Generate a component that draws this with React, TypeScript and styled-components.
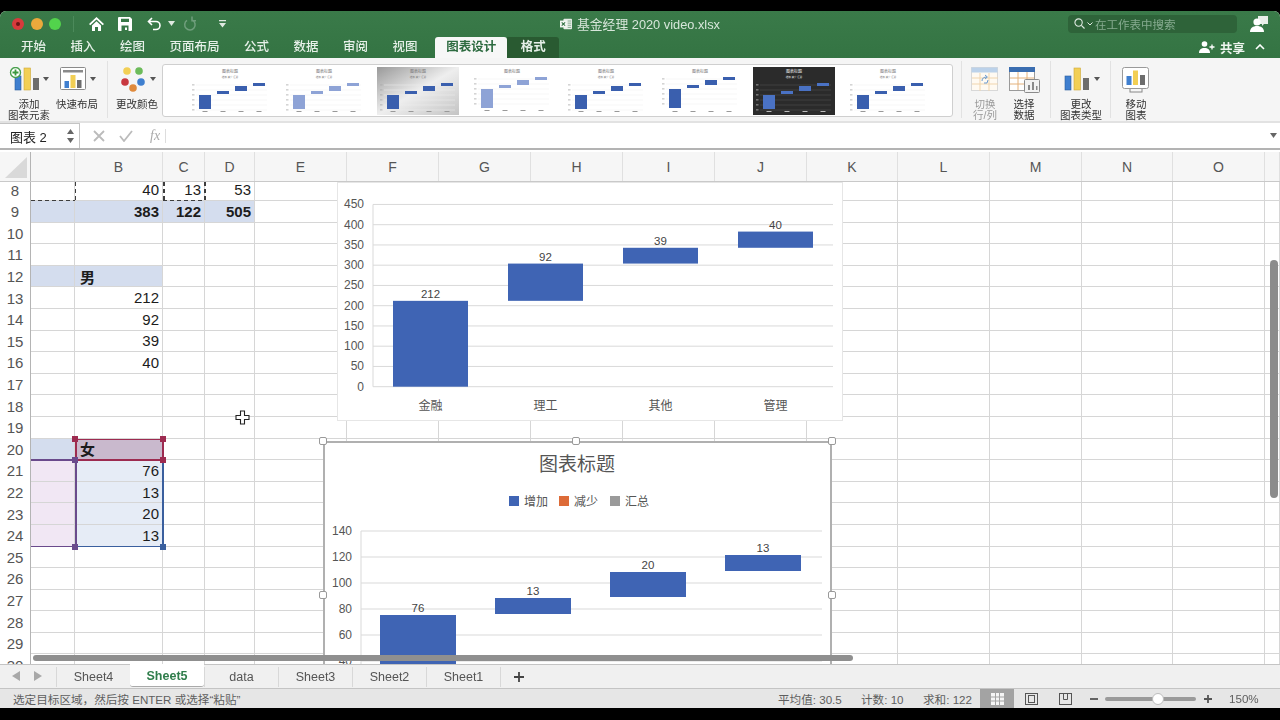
import React from "react";
import styled, { createGlobalStyle, css } from "styled-components";

const FONT = `"Liberation Sans", "Noto Sans CJK SC", sans-serif`;
const BLUE = "#3f64b4";

const GlobalStyle = createGlobalStyle`
  html, body { margin: 0; padding: 0; background: #000; }
  body { font-family: ${FONT}; overflow: hidden; }
`;

const Screen = styled.div`
  width: 1280px;
  height: 720px;
  padding: 11px 0 12px;
  box-sizing: border-box;
  filter: blur(0.35px);
`;

const Win = styled.div`
  height: 697px;
  display: flex;
  flex-direction: column;
  border-radius: 6px 6px 0 0;
  overflow: hidden;
  background: #fff;
`;

/* ---------- title bar ---------- */
const Head = styled.header`
  background: linear-gradient(#3a7a49, #347443);
  height: 47px;
  flex: none;
`;

const TitleRow = styled.div`
  height: 25px;
  display: grid;
  grid-template-columns: 1fr auto 1fr;
  align-items: center;
`;

const QuickBar = styled.div`
  display: flex;
  align-items: center;
  padding-left: 12px;
`;

const Light = styled.span<{ $c: string; $dot?: boolean }>`
  width: 12px;
  height: 12px;
  margin-right: 6.5px;
  border-radius: 50%;
  background: ${(p) => p.$c};
  display: flex;
  align-items: center;
  justify-content: center;
  ${(p) =>
    p.$dot &&
    css`
      &::after {
        content: "";
        width: 4px;
        height: 4px;
        border-radius: 50%;
        background: #6b1416;
      }
    `}
`;

const BarDivider = styled.span`
  width: 1px;
  height: 16px;
  background: #4c8a5b;
  margin: 0 15px 0 5px;
`;

const QuickIcon = styled.span<{ $w: number }>`
  width: ${(p) => p.$w}px;
  display: flex;
  align-items: center;
`;

const DocTitle = styled.div`
  display: flex;
  align-items: center;
  gap: 5px;
  color: #d7e6da;
  font-size: 12.8px;
  white-space: nowrap;
`;

const RightTools = styled.div`
  display: flex;
  align-items: center;
  justify-content: flex-end;
  padding-right: 12px;
`;

const Search = styled.div`
  width: 169px;
  height: 18px;
  background: #2e6339;
  border-radius: 4px;
  display: flex;
  align-items: center;
  padding-left: 6px;
  box-sizing: border-box;
  gap: 2px;
  margin-right: 13px;
  color: #86ab90;
  font-size: 11.5px;
`;

const TabRow = styled.nav`
  height: 22px;
  display: flex;
  align-items: flex-end;
  padding-left: 21px;
`;

const Tab = styled.div<{ $active?: boolean; $dark?: boolean; $last?: boolean }>`
  height: 21px;
  line-height: 21px;
  font-size: 12.5px;
  font-weight: 500;
  color: #e6f0e8;
  margin-right: ${(p) => (p.$last ? 17.5 : 24.5)}px;
  white-space: nowrap;
  ${(p) =>
    p.$active &&
    css`
      margin: 0;
      padding: 0 11px;
      background: #f7f7f7;
      color: #2d6b40;
      font-weight: 700;
      border-radius: 3px 3px 0 0;
    `}
  ${(p) =>
    p.$dark &&
    css`
      margin: 0;
      padding: 0 13.5px;
      background: #295a31;
      font-weight: 700;
      border-radius: 0 3px 0 0;
    `}
`;

const Share = styled.div`
  margin-left: auto;
  height: 22px;
  display: flex;
  align-items: center;
  color: #eef5ef;
  font-size: 12.5px;
  font-weight: 700;
  gap: 5px;
  padding-right: 15px;
`;

const Chevron = styled.span`
  margin-left: 5px;
  display: flex;
`;

/* ---------- ribbon ---------- */
const Ribbon = styled.section`
  height: 65px;
  flex: none;
  background: #f5f5f5;
  border-bottom: 2px solid #e2e2e2;
  box-sizing: border-box;
  display: flex;
  padding-left: 5px;
`;

const RibbonBtn = styled.div<{ $w: number; $off?: boolean }>`
  width: ${(p) => p.$w}px;
  flex: none;
  display: flex;
  flex-direction: column;
  align-items: center;
  color: ${(p) => (p.$off ? "#9a9a9a" : "#333")};
  font-size: 10.5px;
  line-height: 11px;
  text-align: center;
  white-space: nowrap;
`;

const RibbonIcon = styled.div`
  height: 41px;
  padding-top: 9px;
  box-sizing: border-box;
  display: flex;
  align-items: flex-start;
`;

const RibbonSep = styled.div<{ $l: number; $r: number }>`
  width: 1px;
  height: 57px;
  margin: 3px ${(p) => p.$r}px 0 ${(p) => p.$l}px;
  background: #e2e2e2;
  flex: none;
`;

const Gallery = styled.div`
  width: 791px;
  height: 53px;
  margin-top: 6px;
  flex: none;
  background: #fff;
  border: 1px solid #cfcfcf;
  border-radius: 3px;
  box-sizing: border-box;
  display: flex;
  align-items: center;
  padding-left: 26px;
  gap: 12px;
`;

/* ---------- formula bar ---------- */
const FormulaBar = styled.div`
  height: 27px;
  flex: none;
  background: #fff;
  display: flex;
  align-items: center;
  border-bottom: 2px solid #b3b3b3;
  box-sizing: border-box;
  color: #bbb;
`;

const NameBox = styled.div`
  width: 80px;
  height: 25px;
  border: 1px solid #c4c4c4;
  border-width: 1px 1px 0 0;
  box-sizing: border-box;
  display: flex;
  align-items: center;
  justify-content: space-between;
  padding: 0 5px 0 10px;
  color: #222;
  font-size: 13px;
`;

const FormulaIcon = styled.span<{ $ml: number }>`
  margin-left: ${(p) => p.$ml}px;
  display: flex;
`;

const FxMark = styled.span`
  font-family: "Liberation Serif", serif;
  font-style: italic;
  font-size: 14px;
  color: #aaa;
  margin-left: 17px;
  width: 14px;
`;

const FxRule = styled.span`
  width: 1px;
  height: 14px;
  background: #ddd;
  margin-left: 1px;
`;

const FormulaEnd = styled.span`
  margin-left: auto;
  margin-right: 3px;
  display: flex;
`;

/* ---------- sheet ---------- */
const COLS = "31px 44px 88px 42px 50px 92px 92px 92px 92px 92px 92px 91px 92px 92px 91px 92px 15px";

const ColHeader = styled.div`
  height: 29px;
  flex: none;
  display: grid;
  grid-template-columns: ${COLS};
  background: #f6f6f6;
  border-bottom: 1px solid #c9c9c9;
  box-sizing: content-box;
  margin-top: 2px;
`;

const ColCell = styled.div`
  display: flex;
  align-items: center;
  justify-content: center;
  font-size: 14px;
  color: #555;
  border-right: 1px solid #e0e0e0;
`;

const Corner = styled.div`
  border-right: 1px solid #b4b4b4;
  position: relative;
  &::after {
    content: "";
    position: absolute;
    inset: 5px 3px 3px 5px;
    background: #d9d9d9;
    clip-path: polygon(100% 0, 100% 100%, 0 100%);
  }
`;

const SheetView = styled.div`
  flex: 1;
  position: relative;
  overflow: hidden;
  background: #fff;
`;

const Grid = styled.div`
  display: grid;
  grid-template-columns: ${COLS};
  grid-auto-rows: 21.6px;
  margin-top: -2.6px;
`;

const RowHead = styled.div`
  display: flex;
  align-items: center;
  justify-content: center;
  font-size: 15px;
  color: #555;
  border-right: 1px solid #b4b4b4;
  box-sizing: border-box;
`;

const Cell = styled.div<{ $fill?: string; $bold?: boolean; $left?: boolean }>`
  box-sizing: border-box;
  border-right: 1px solid #d6d6d6;
  border-bottom: 1px solid #d6d6d6;
  background: ${(p) => p.$fill || "transparent"};
  font-size: 15px;
  font-weight: ${(p) => (p.$bold ? 700 : 400)};
  color: #1c1c1c;
  display: flex;
  align-items: center;
  justify-content: ${(p) => (p.$left ? "flex-start" : "flex-end")};
  padding: 0 3px 0 5px;
`;

const Edge = styled.div<{ $x: number; $y: number; $w: number; $h: number; $c: string; $dash?: boolean }>`
  position: absolute;
  left: ${(p) => p.$x}px;
  top: ${(p) => p.$y}px;
  width: ${(p) => p.$w}px;
  height: ${(p) => p.$h}px;
  ${(p) =>
    p.$dash
      ? css`
          background-image: repeating-linear-gradient(
            ${p.$w > p.$h ? "90deg" : "0deg"},
            ${p.$c} 0 4px,
            transparent 4px 7px
          );
        `
      : css`
          background: ${p.$c};
        `}
`;

const Knob = styled.div<{ $x: number; $y: number; $c: string }>`
  position: absolute;
  left: ${(p) => p.$x - 3}px;
  top: ${(p) => p.$y - 3}px;
  width: 6px;
  height: 6px;
  background: ${(p) => p.$c};
`;

const ChartOne = styled.div`
  position: absolute;
  left: 337px;
  top: 0;
  width: 506px;
  height: 239px;
  background: #fff;
  border: 1px solid #e6e6e6;
  box-sizing: border-box;
`;

const ChartTwo = styled.div`
  position: absolute;
  left: 323px;
  top: 259px;
  width: 509px;
  height: 300px;
  background: #fff;
  border: 2px solid #b0b0b0;
  box-sizing: border-box;
`;

const Grip = styled.div<{ $x: number; $y: number }>`
  position: absolute;
  left: ${(p) => p.$x - 4}px;
  top: ${(p) => p.$y - 4}px;
  width: 8px;
  height: 8px;
  background: #fff;
  border: 1px solid #9a9a9a;
  border-radius: 2px;
  box-sizing: border-box;
`;

const HScroll = styled.div`
  position: absolute;
  left: 33px;
  bottom: 3px;
  width: 820px;
  height: 6px;
  border-radius: 3px;
  background: #8f8f8f;
`;

const VScroll = styled.div`
  position: absolute;
  left: 1270px;
  top: 78px;
  width: 8px;
  height: 238px;
  border-radius: 4px;
  background: #8c8c8c;
`;

const CursorMark = styled.svg`
  position: absolute;
  left: 235px;
  top: 228px;
`;

/* ---------- sheet tabs + status ---------- */
const TabStrip = styled.div`
  height: 24px;
  flex: none;
  background: #f0f0f0;
  border-top: 1px solid #c4c4c4;
  box-sizing: border-box;
  display: flex;
  align-items: flex-start;
`;

const StripArrows = styled.div`
  width: 56px;
  height: 22px;
  box-sizing: border-box;
  display: flex;
  align-items: center;
  padding-left: 12px;
  gap: 14px;
`;

const SheetTab = styled.div<{ $active?: boolean; $w?: number }>`
  width: ${(p) => p.$w || 74}px;
  height: 20px;
  margin-top: 2px;
  box-sizing: border-box;
  display: flex;
  align-items: center;
  justify-content: center;
  font-size: 12.5px;
  color: #555;
  border-left: 1px solid #d8d8d8;
  ${(p) =>
    p.$active &&
    css`
      background: #fff;
      color: #2f7d4b;
      font-weight: 700;
      margin-top: -1px;
      height: 23px;
      padding-top: 2px;
      border: none;
      border-bottom: 1px solid #aaa;
      border-radius: 0 0 3px 3px;
    `}
`;

const StatusBar = styled.footer`
  height: 20px;
  flex: none;
  background: #e6e6e6;
  border-top: 1px solid #c4c4c4;
  box-sizing: border-box;
  display: flex;
  align-items: center;
  padding-left: 13px;
  color: #5e5e5e;
`;

const StatText = styled.span<{ $w: number; $ml?: number }>`
  width: ${(p) => p.$w}px;
  margin-left: ${(p) => p.$ml || 0}px;
  flex: none;
  font-size: 11.6px;
  white-space: nowrap;
`;

const ViewBtn = styled.div<{ $on?: boolean }>`
  width: 34px;
  height: 19px;
  flex: none;
  display: flex;
  align-items: center;
  justify-content: center;
  background: ${(p) => (p.$on ? "#a3a3a3" : "transparent")};
`;

const ZoomSign = styled.span`
  display: flex;
`;

const ZoomMinus = styled(ZoomSign)`
  margin-left: 8px;
`;

const ZoomTrack = styled.div`
  width: 91px;
  height: 4px;
  border-radius: 2px;
  background: #9a9a9a;
  margin: 0 8px 0 7px;
  position: relative;
`;

const ZoomKnob = styled.span`
  position: absolute;
  left: 47px;
  top: -4px;
  width: 12px;
  height: 12px;
  border-radius: 50%;
  background: #fff;
  border: 1px solid #bbb;
  box-sizing: border-box;
`;

const Caret = ({ c = "#555" }: { c?: string }) => (
  <svg width="7" height="5" viewBox="0 0 7 5">
    <path d="M0 0h7L3.500 5z" fill={c} />
  </svg>
);

const Bars = () => (
  <g>
    <rect x="0" y="9" width="6" height="14" fill="#3f7fcf" stroke="#2a5c9c" strokeWidth=".6" />
    <rect x="9" y="1" width="6.500" height="22" fill="#f2cf55" stroke="#cda93a" strokeWidth=".6" />
    <rect x="18" y="11" width="6" height="12" fill="#6d6d6d" />
  </g>
);

const AddIcon = () => (
  <svg width="44" height="26" viewBox="0 0 44 26">
    <g transform="translate(8 0)">
      <Bars />
    </g>
    <circle cx="8.500" cy="5.500" r="5" fill="#fff" stroke="#4aa04e" strokeWidth="1.400" />
    <path d="M8.500 2.500v6M5.500 5.500h6" stroke="#3c983f" strokeWidth="1.800" />
    <path d="M36 10h6l-3 4z" fill="#555" />
  </svg>
);

const LayoutIcon = () => (
  <svg width="38" height="25" viewBox="0 0 38 25">
    <g transform="translate(2 0)">
      <rect x=".5" y=".5" width="25" height="22" rx="1" fill="#fff" stroke="#8a8a8a" />
      <rect x="3" y="3" width="20" height="2.500" fill="#8a8a8a" />
      <rect x="4.500" y="14" width="4.500" height="7" fill="#3f7fcf" />
      <rect x="10.500" y="8" width="5" height="13" fill="#f2cf55" />
      <rect x="17" y="13" width="4.500" height="8" fill="#6d6d6d" />
    </g>
    <path d="M32 10h6l-3 4z" fill="#555" />
  </svg>
);

const ColorIcon = () => (
  <svg width="38" height="27" viewBox="0 0 38 27">
    <circle cx="9" cy="4" r="3.800" fill="#f2cf55" />
    <circle cx="21" cy="4" r="3.800" fill="#6cbb5a" />
    <circle cx="7" cy="15" r="3.800" fill="#c8383f" />
    <circle cx="23" cy="15" r="3.800" fill="#3f7fcf" />
    <circle cx="15" cy="21" r="3.800" fill="#e08a3c" />
    <path d="M32 10h6l-3 4z" fill="#555" />
  </svg>
);

const SwitchIcon = () => (
  <svg width="28" height="25" viewBox="0 0 28 25">
    <rect x=".5" y=".5" width="26" height="23" fill="#fffaf2" stroke="#d8d8d8" />
    <rect x=".5" y=".5" width="26" height="5" fill="#bcd2ea" />
    <path d="M1 11h26M1 17h26M9 6v18M18 6v18" stroke="#f0d5ae" />
    <path d="M11 14c0-3 2-4 5-4M14 8l2.400 2L14 12M17 13l-1 3-3 0" stroke="#6b9bd1" fill="none" />
  </svg>
);

const DataIcon = () => (
  <svg width="31" height="26" viewBox="0 0 31 26">
    <rect x=".5" y=".5" width="25" height="23" fill="#fff" stroke="#9a9a9a" />
    <rect x="0" y="0" width="26" height="5" fill="#3a6db0" />
    <path d="M9 5v18M18 5v18M1 11h24M1 17h24" stroke="#e4b27c" />
    <rect x="15.500" y="12.500" width="15" height="13" rx="1" fill="#f2f2f2" stroke="#8a8a8a" />
    <path d="M19 18h2v5h-2zM23 15h2v8h-2zM27 19h1.500v4H27z" fill="#8a8a8a" />
  </svg>
);

const TypeIcon = () => (
  <svg width="38" height="25" viewBox="0 0 38 25">
    <g transform="translate(3 0)">
      <Bars />
    </g>
    <path d="M32 10h6l-3 4z" fill="#555" />
  </svg>
);

const MoveIcon = () => (
  <svg width="28" height="26" viewBox="0 0 28 26">
    <rect x="8" y="19" width="12" height="6" fill="#f7f7f7" stroke="#888" />
    <rect x=".5" y=".5" width="26" height="21" rx="2" fill="#fff" stroke="#9a9a9a" />
    <rect x="4.500" y="9" width="5" height="9" fill="#3f7fcf" />
    <rect x="11" y="3.500" width="5" height="14.500" fill="#f2cf55" />
    <rect x="18" y="8" width="5" height="10" fill="#6d6d6d" />
  </svg>
);

type ThumbKind = {
  dark?: boolean;
  grey?: boolean;
  pale?: boolean;
  legend?: boolean;
  bottom?: boolean;
  tall?: boolean;
};

const THUMBS: ThumbKind[] = [
  { legend: true },
  { legend: true, pale: true },
  { legend: true, grey: true },
  { pale: true, bottom: true, tall: true },
  { legend: true },
  { tall: true },
  { legend: true, dark: true },
  { legend: true },
];

const Thumb = ({ dark, grey, pale, legend, bottom, tall }: ThumbKind) => {
  const fill = pale ? "#8ea3d6" : dark ? "#4a72c4" : "#3a5fae";
  const ink = dark ? "#eee" : "#777";
  const shift = tall ? -6 : 0;
  const bars = [
    [10, 28, 14],
    [28, 24, 3],
    [46, 19, 5],
    [64, 16, 3],
  ];
  return (
    <svg width="82" height="48" viewBox="0 0 82 48">
      <defs>
        <linearGradient id="thumbGrey" x1="0" y1="0" x2="1" y2="1">
          <stop offset="0" stopColor="#999" />
          <stop offset=".5" stopColor="#eee" />
          <stop offset="1" stopColor="#c4c4c4" />
        </linearGradient>
      </defs>
      <rect width="82" height="48" fill={dark ? "#2b2b2b" : grey ? "url(#thumbGrey)" : "#fff"} />
      <text x="41" y="6" fontSize="4" textAnchor="middle" fill={ink} fontFamily={FONT}>
        图表标题
      </text>
      {legend && (
        <text x="41" y="11" fontSize="2.500" textAnchor="middle" fill={ink} fontFamily={FONT}>
          增加 减少 汇总
        </text>
      )}
      {[0, 1, 2, 3, 4, 5].map((i) => (
        <g key={i}>
          <line x1="7" x2="78" y1={18 + i * 5 + shift} y2={18 + i * 5 + shift} stroke={dark ? "#555" : "#eee"} strokeWidth=".5" />
          <rect x="3" y={17.5 + i * 5 + shift} width="2.500" height=".8" fill={dark ? "#bbb" : "#aaa"} />
        </g>
      ))}
      {bars.map(([x, y, h]) => (
        <rect key={x} x={x} y={y + shift} width="12" height={tall && x === 10 ? h + 5 : h} fill={fill} />
      ))}
      {[16, 34, 52, 70].map((x) => (
        <rect key={x} x={x - 2.5} y={44 + (bottom ? -1 : 0)} width="5" height="1" fill={dark ? "#bbb" : "#999"} />
      ))}
    </svg>
  );
};

const FONT_ATTR = { fontFamily: FONT };

const ChartOneArt = () => {
  const y = (v: number) => 203.7 - v * 0.405;
  const ticks = [0, 50, 100, 150, 200, 250, 300, 350, 400, 450];
  const bars = [
    { x: 55, from: 0, to: 212, label: "212", cat: "金融" },
    { x: 170, from: 212, to: 304, label: "92", cat: "理工" },
    { x: 285, from: 304, to: 343, label: "39", cat: "其他" },
    { x: 400, from: 343, to: 383, label: "40", cat: "管理" },
  ];
  return (
    <svg width="504" height="237" viewBox="0 0 504 237" {...FONT_ATTR}>
      {ticks.map((t) => (
        <g key={t}>
          <line x1="35" x2="495" y1={y(t)} y2={y(t)} stroke="#d9d9d9" />
          <text x="26" y={y(t) + 4} fontSize="12" textAnchor="end" fill="#555">
            {t}
          </text>
        </g>
      ))}
      <line x1="35" x2="35" y1={y(450)} y2={y(0)} stroke="#d9d9d9" />
      {bars.map((b) => (
        <g key={b.cat}>
          <rect x={b.x} y={y(b.to)} width="75" height={y(b.from) - y(b.to)} fill={BLUE} />
          <text x={b.x + 37.5} y={y(b.to) - 3} fontSize="11.5" textAnchor="middle" fill="#444">
            {b.label}
          </text>
          <text x={b.x + 37.5} y="227" fontSize="12" textAnchor="middle" fill="#555">
            {b.cat}
          </text>
        </g>
      ))}
    </svg>
  );
};

const ChartTwoArt = () => {
  const y = (v: number) => 88 + (140 - v) * 1.3;
  const ticks = [140, 120, 100, 80, 60, 40];
  const bars = [
    { x: 55, top: 172, bot: 296, label: "76" },
    { x: 170, top: 155, bot: 171, label: "13" },
    { x: 285, top: 129, bot: 154, label: "20" },
    { x: 400, top: 112, bot: 128, label: "13" },
  ];
  const legend = [
    { x: 184, c: BLUE, t: "增加" },
    { x: 234, c: "#dd6b38", t: "减少" },
    { x: 285, c: "#9a9a9a", t: "汇总" },
  ];
  return (
    <svg width="505" height="296" viewBox="0 0 505 296" {...FONT_ATTR}>
      <text x="252" y="28" fontSize="19" textAnchor="middle" fill="#555">
        图表标题
      </text>
      {legend.map((l) => (
        <g key={l.t}>
          <rect x={l.x} y="53" width="10" height="10" fill={l.c} />
          <text x={l.x + 15} y="63" fontSize="12" fill="#555">
            {l.t}
          </text>
        </g>
      ))}
      {ticks.map((t) => (
        <g key={t}>
          <line x1="36" x2="497" y1={y(t)} y2={y(t)} stroke="#d9d9d9" />
          <text x="27" y={y(t) + 4} fontSize="12" textAnchor="end" fill="#555">
            {t}
          </text>
        </g>
      ))}
      <line x1="36" x2="36" y1={y(140)} y2="296" stroke="#d9d9d9" />
      {bars.map((b) => (
        <g key={b.x}>
          <rect x={b.x} y={b.top} width="76" height={b.bot - b.top} fill={BLUE} />
          <text x={b.x + 38} y={b.top - 3} fontSize="11.5" textAnchor="middle" fill="#444">
            {b.label}
          </text>
        </g>
      ))}
    </svg>
  );
};

type CellDef = { text?: string; fill?: string; bold?: boolean; left?: boolean };

const HEADER_BLUE = "#d4ddee";
const SHEET: Record<number, Record<string, CellDef>> = {
  8: { B: { text: "40" }, C: { text: "13" }, D: { text: "53" } },
  9: {
    A: { fill: HEADER_BLUE },
    B: { text: "383", bold: true, fill: HEADER_BLUE },
    C: { text: "122", bold: true, fill: HEADER_BLUE },
    D: { text: "505", bold: true, fill: HEADER_BLUE },
  },
  12: { A: { fill: HEADER_BLUE }, B: { text: "男", bold: true, left: true, fill: HEADER_BLUE } },
  13: { B: { text: "212" } },
  14: { B: { text: "92" } },
  15: { B: { text: "39" } },
  16: { B: { text: "40" } },
  20: { A: { fill: HEADER_BLUE }, B: { text: "女", bold: true, left: true, fill: "#c9b9cd" } },
  21: { A: { fill: "#f1e7f4" }, B: { text: "76", fill: "#e6ecf6" } },
  22: { A: { fill: "#f1e7f4" }, B: { text: "13", fill: "#e6ecf6" } },
  23: { A: { fill: "#f1e7f4" }, B: { text: "20", fill: "#e6ecf6" } },
  24: { A: { fill: "#f1e7f4" }, B: { text: "13", fill: "#e6ecf6" } },
};

const LETTERS = ["A", "B", "C", "D", "E", "F", "G", "H", "I", "J", "K", "L", "M", "N", "O", ""];
const ROWS = Array.from({ length: 23 }, (_, i) => i + 8);
const rowTop = (n: number) => 19 + (n - 9) * 21.6;

const RED = "#9d2b50";
const PURPLE = "#6a4a8c";
const NAVY = "#3a5f9e";
const TABS = ["开始", "插入", "绘图", "页面布局", "公式", "数据", "审阅", "视图"];

export default function App() {
  return (
    <Screen>
      <GlobalStyle />
      <Win>
        <Head>
          <TitleRow>
            <QuickBar>
              <Light $c="#d63a3c" $dot />
              <Light $c="#eaa93c" />
              <Light $c="#52d34c" />
              <BarDivider />
              <QuickIcon $w={29}>
                <svg width="15" height="14" viewBox="0 0 15 14">
                  <path d="M7.500 0 15 7l-1.300 1.200L7.500 2.400 1.300 8.200 0 7z M3 8.500l4.500-4.200L12 8.500V14H9V10H6v4H3z" fill="#fff" />
                </svg>
              </QuickIcon>
              <QuickIcon $w={29}>
                <svg width="14" height="14" viewBox="0 0 14 14">
                  <path fillRule="evenodd" d="M1 0h11l2 2v11a1 1 0 0 1-1 1H1a1 1 0 0 1-1-1V1a1 1 0 0 1 1-1zM3 1.800V5h8V1.800zM3.500 8.500V14h7V8.500z" fill="#fff" />
                  <rect x="7" y="10.500" width="2" height="2.500" fill="#fff" />
                </svg>
              </QuickIcon>
              <QuickIcon $w={21}>
                <svg width="15" height="14" viewBox="0 0 15 14">
                  <path d="M5 1 1.500 4.500 5 8M2 4.500h7a4 4 0 0 1 0 8H6" fill="none" stroke="#fff" strokeWidth="1.600" />
                </svg>
              </QuickIcon>
              <QuickIcon $w={15}>
                <Caret c="#dfe9e1" />
              </QuickIcon>
              <QuickIcon $w={36}>
                <svg width="14" height="15" viewBox="0 0 14 15">
                  <path d="M9.500 4.200a5.200 5.200 0 1 1-5.500.2" fill="none" stroke="#6f9e7c" strokeWidth="1.500" />
                  <path d="M9 .5v4.200h4" fill="none" stroke="#6f9e7c" strokeWidth="1.500" />
                </svg>
              </QuickIcon>
              <QuickIcon $w={8}>
                <svg width="7" height="8" viewBox="0 0 7 8">
                  <path d="M0 0h7v1.200H0zM0 3h7L3.500 7.500z" fill="#dfe9e1" />
                </svg>
              </QuickIcon>
            </QuickBar>
            <DocTitle>
              <svg width="12" height="14" viewBox="0 0 14 14">
                <rect x="4" y="1" width="10" height="12" rx="1" fill="#e9efe9" />
                <path d="M9 3.500h4M9 6h4M9 8.500h4M9 11h4" stroke="#7da488" />
                <rect x="0" y="3" width="8" height="8" fill="#f2f6f2" />
                <path d="m2 5 4 4m0-4-4 4" stroke="#2f7040" strokeWidth="1.200" />
              </svg>
              基金经理 2020 video.xlsx
            </DocTitle>
            <RightTools>
              <Search>
                <svg width="11" height="11" viewBox="0 0 12 12">
                  <circle cx="5" cy="5" r="4" fill="none" stroke="#dfe9e1" strokeWidth="1.200" />
                  <path d="m8 8 3.500 3.500" stroke="#dfe9e1" strokeWidth="1.300" />
                </svg>
                <svg width="6" height="4" viewBox="0 0 6 4">
                  <path d="m.5.500 2.500 2.500L5.500.500" fill="none" stroke="#dfe9e1" />
                </svg>
                在工作表中搜索
              </Search>
              <svg width="18" height="18" viewBox="0 0 18 18">
                <path d="M8 1h10v8h-4l-2 2v-2H8z" fill="#e9efe9" />
                <circle cx="7" cy="7" r="3.600" fill="#fff" />
                <path d="M0 17c0-4 3-6 7-6s7 2 7 6z" fill="#fff" />
              </svg>
            </RightTools>
          </TitleRow>
          <TabRow>
            {TABS.map((t, i) => (
              <Tab key={t} $last={i === TABS.length - 1}>
                {t}
              </Tab>
            ))}
            <Tab $active>图表设计</Tab>
            <Tab $dark>格式</Tab>
            <Share>
              <svg width="16" height="12" viewBox="0 0 16 12">
                <circle cx="5.500" cy="3" r="2.800" fill="#fff" />
                <path d="M0 12c0-3.500 2-5 5.500-5S11 8.500 11 12z" fill="#fff" />
                <path d="M13 3.500v5M10.500 6h5" stroke="#fff" strokeWidth="1.300" />
              </svg>
              共享
              <Chevron>
                <svg width="10" height="6" viewBox="0 0 10 6">
                  <path d="m1 5 4-4 4 4" fill="none" stroke="#fff" strokeWidth="1.600" />
                </svg>
              </Chevron>
            </Share>
          </TabRow>
        </Head>

        <Ribbon>
          <RibbonBtn $w={48}>
            <RibbonIcon>
              <AddIcon />
            </RibbonIcon>
            添加
            <br />
            图表元素
          </RibbonBtn>
          <RibbonBtn $w={48}>
            <RibbonIcon>
              <LayoutIcon />
            </RibbonIcon>
            快速布局
          </RibbonBtn>
          <RibbonSep $l={6} $r={4} />
          <RibbonBtn $w={50}>
            <RibbonIcon>
              <ColorIcon />
            </RibbonIcon>
            更改颜色
          </RibbonBtn>
          <Gallery>
            {THUMBS.map((t, i) => (
              <Thumb key={i} {...t} />
            ))}
          </Gallery>
          <RibbonSep $l={8} $r={3} />
          <RibbonBtn $w={40} $off>
            <RibbonIcon>
              <SwitchIcon />
            </RibbonIcon>
            切换
            <br />
            行/列
          </RibbonBtn>
          <RibbonBtn $w={38}>
            <RibbonIcon>
              <DataIcon />
            </RibbonIcon>
            选择
            <br />
            数据
          </RibbonBtn>
          <RibbonSep $l={7} $r={1} />
          <RibbonBtn $w={58}>
            <RibbonIcon>
              <TypeIcon />
            </RibbonIcon>
            更改
            <br />
            图表类型
          </RibbonBtn>
          <RibbonSep $l={0} $r={0} />
          <RibbonBtn $w={50}>
            <RibbonIcon>
              <MoveIcon />
            </RibbonIcon>
            移动
            <br />
            图表
          </RibbonBtn>
        </Ribbon>

        <FormulaBar>
          <NameBox>
            图表 2
            <svg width="7" height="15" viewBox="0 0 7 15">
              <path d="M3.500 0 7 5H0zM0 9h7l-3.500 5z" fill="#666" />
            </svg>
          </NameBox>
          <FormulaIcon $ml={12}>
            <svg width="14" height="12" viewBox="0 0 12 12">
              <path d="m1 1 10 10M11 1 1 11" stroke="#bbb" strokeWidth="1.800" />
            </svg>
          </FormulaIcon>
          <FormulaIcon $ml={13}>
            <svg width="14" height="12" viewBox="0 0 14 12">
              <path d="m1 6 4 5 8-10" fill="none" stroke="#bbb" strokeWidth="1.800" />
            </svg>
          </FormulaIcon>
          <FxMark>fx</FxMark>
          <FxRule />
          <FormulaEnd>
            <Caret c="#666" />
          </FormulaEnd>
        </FormulaBar>

        <ColHeader>
          <Corner />
          {LETTERS.map((l, i) => (
            <ColCell key={i}>{l === "A" ? "" : l}</ColCell>
          ))}
        </ColHeader>

        <SheetView>
          <Grid>
            {ROWS.map((r) => (
              <React.Fragment key={r}>
                <RowHead>{r}</RowHead>
                {LETTERS.map((l, i) => {
                  const c = SHEET[r]?.[l];
                  return (
                    <Cell key={i} $fill={c?.fill} $bold={c?.bold} $left={c?.left}>
                      {c?.text}
                    </Cell>
                  );
                })}
              </React.Fragment>
            ))}
          </Grid>

          <Edge $dash $c="#3d3d3d" $x={31} $y={17.5} $w={44} $h={1.5} />
          <Edge $dash $c="#3d3d3d" $x={74.5} $y={0} $w={1.5} $h={18} />
          <Edge $dash $c="#3d3d3d" $x={163} $y={0} $w={1.5} $h={18} />
          <Edge $dash $c="#3d3d3d" $x={204} $y={0} $w={1.5} $h={18} />
          <Edge $dash $c="#3d3d3d" $x={163} $y={17.5} $w={42} $h={1.5} />

          <Edge $c={RED} $x={75} $y={rowTop(20)} $w={88} $h={1.5} />
          <Edge $c={RED} $x={75} $y={rowTop(21) - 1} $w={88} $h={1.5} />
          <Edge $c={RED} $x={75} $y={rowTop(20)} $w={1.5} $h={21.6} />
          <Edge $c={RED} $x={162} $y={rowTop(20)} $w={1.5} $h={21.6} />
          <Edge $c={PURPLE} $x={31} $y={rowTop(21) - 1} $w={44} $h={1.5} />
          <Edge $c={PURPLE} $x={31} $y={rowTop(25) - 1} $w={44} $h={1.5} />
          <Edge $c={PURPLE} $x={75} $y={rowTop(21)} $w={1.5} $h={86.4} />
          <Edge $c={NAVY} $x={76} $y={rowTop(25) - 1} $w={87} $h={1.5} />
          <Edge $c={NAVY} $x={162} $y={rowTop(21)} $w={1.5} $h={86.4} />
          <Knob $c={RED} $x={75} $y={rowTop(20)} />
          <Knob $c={RED} $x={163} $y={rowTop(20)} />
          <Knob $c={PURPLE} $x={75} $y={rowTop(21)} />
          <Knob $c={RED} $x={163} $y={rowTop(21)} />
          <Knob $c={PURPLE} $x={75} $y={rowTop(25)} />
          <Knob $c={NAVY} $x={163} $y={rowTop(25)} />

          <ChartOne>
            <ChartOneArt />
          </ChartOne>
          <ChartTwo>
            <ChartTwoArt />
          </ChartTwo>
          <Grip $x={323} $y={259} />
          <Grip $x={576} $y={259} />
          <Grip $x={832} $y={259} />
          <Grip $x={323} $y={413} />
          <Grip $x={832} $y={413} />

          <CursorMark width="15" height="15" viewBox="0 0 15 15">
            <path d="M5.500 1h4v4.500H14v4H9.500V14h-4V9.500H1v-4h4.500z" fill="#fff" stroke="#222" strokeWidth="1.100" />
          </CursorMark>
          <HScroll />
          <VScroll />
        </SheetView>

        <TabStrip>
          <StripArrows>
            <svg width="8" height="10" viewBox="0 0 8 10">
              <path d="M8 0v10L0 5z" fill="#a8a8a8" />
            </svg>
            <svg width="8" height="10" viewBox="0 0 8 10">
              <path d="M0 0v10l8-5z" fill="#a8a8a8" />
            </svg>
          </StripArrows>
          <SheetTab>Sheet4</SheetTab>
          <SheetTab $active>Sheet5</SheetTab>
          <SheetTab>data</SheetTab>
          <SheetTab>Sheet3</SheetTab>
          <SheetTab>Sheet2</SheetTab>
          <SheetTab>Sheet1</SheetTab>
          <SheetTab $w={36}>
            <svg width="10" height="10" viewBox="0 0 10 10">
              <path d="M5 0v10M0 5h10" stroke="#444" strokeWidth="1.800" />
            </svg>
          </SheetTab>
        </TabStrip>

        <StatusBar>
          <StatText $w={765}>选定目标区域，然后按 ENTER 或选择“粘贴”</StatText>
          <StatText $w={83}>平均值: 30.5</StatText>
          <StatText $w={62}>计数: 10</StatText>
          <StatText $w={57}>求和: 122</StatText>
          <ViewBtn $on>
            <svg width="13" height="12" viewBox="0 0 13 12">
              <rect width="13" height="12" fill="#f5f5f5" />
              <path d="M4.500 0v12M8.500 0v12M0 4h13M0 8h13" stroke="#a3a3a3" />
            </svg>
          </ViewBtn>
          <ViewBtn>
            <svg width="13" height="12" viewBox="0 0 13 12">
              <rect x=".5" y=".5" width="12" height="11" fill="none" stroke="#555" />
              <rect x="3.500" y="2.500" width="6" height="7" fill="none" stroke="#555" />
            </svg>
          </ViewBtn>
          <ViewBtn>
            <svg width="13" height="12" viewBox="0 0 13 12">
              <rect x=".5" y=".5" width="12" height="11" fill="none" stroke="#555" />
              <path d="M4.500 1v5.500h4V1" fill="none" stroke="#555" />
            </svg>
          </ViewBtn>
          <ZoomMinus>
            <svg width="8" height="8" viewBox="0 0 8 8">
              <path d="M0 4h8" stroke="#555" strokeWidth="1.800" />
            </svg>
          </ZoomMinus>
          <ZoomTrack>
            <ZoomKnob />
          </ZoomTrack>
          <ZoomSign>
            <svg width="8" height="8" viewBox="0 0 8 8">
              <path d="M0 4h8M4 0v8" stroke="#555" strokeWidth="1.800" />
            </svg>
          </ZoomSign>
          <StatText $w={40} $ml={17}>
            150%
          </StatText>
        </StatusBar>
      </Win>
    </Screen>
  );
}
